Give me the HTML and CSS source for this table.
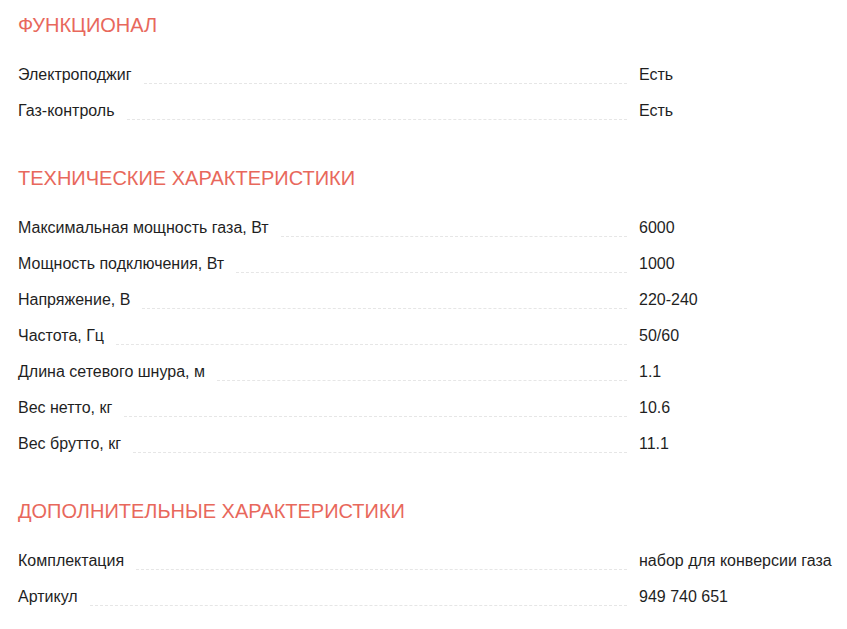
FILE: index.html
```html
<!DOCTYPE html>
<html lang="ru">
<head>
<meta charset="utf-8">
<link rel="stylesheet" href="styles.css">
</head>
<body>
<div class="specs">
  <section class="group">
    <h2 class="group-title">ФУНКЦИОНАЛ</h2>
    <div class="row"><span class="label">Электроподжиг</span><span class="dots"></span><span class="value">Есть</span></div>
    <div class="row"><span class="label">Газ-контроль</span><span class="dots"></span><span class="value">Есть</span></div>
  </section>
  <section class="group">
    <h2 class="group-title">ТЕХНИЧЕСКИЕ ХАРАКТЕРИСТИКИ</h2>
    <div class="row"><span class="label">Максимальная мощность газа, Вт</span><span class="dots"></span><span class="value">6000</span></div>
    <div class="row"><span class="label">Мощность подключения, Вт</span><span class="dots"></span><span class="value">1000</span></div>
    <div class="row"><span class="label">Напряжение, В</span><span class="dots"></span><span class="value">220-240</span></div>
    <div class="row"><span class="label">Частота, Гц</span><span class="dots"></span><span class="value">50/60</span></div>
    <div class="row"><span class="label">Длина сетевого шнура, м</span><span class="dots"></span><span class="value">1.1</span></div>
    <div class="row"><span class="label">Вес нетто, кг</span><span class="dots"></span><span class="value">10.6</span></div>
    <div class="row"><span class="label">Вес брутто, кг</span><span class="dots"></span><span class="value">11.1</span></div>
  </section>
  <section class="group">
    <h2 class="group-title">ДОПОЛНИТЕЛЬНЫЕ ХАРАКТЕРИСТИКИ</h2>
    <div class="row"><span class="label">Комплектация</span><span class="dots"></span><span class="value">набор для конверсии газа</span></div>
    <div class="row"><span class="label">Артикул</span><span class="dots"></span><span class="value">949 740 651</span></div>
  </section>
</div>
</body>
</html>
```

FILE: styles.css
```css
html, body {
  margin: 0;
  padding: 0;
  background: #fff;
}
body {
  font-family: "Liberation Sans", Arial, sans-serif;
  color: #1f1f1f;
}
.specs {
  padding: 12px 0 0 18px;
  width: 815px;
  display: flex;
  flex-direction: column;
  gap: 36px;
}
.group-title {
  margin: 0 0 19px 0;
  font-size: 20px;
  line-height: 26px;
  font-weight: normal;
  color: #e8685c;
}
.row {
  display: flex;
  align-items: flex-end;
  height: 36px;
  font-size: 16px;
  line-height: 36px;
}
.label {
  white-space: nowrap;
}
.dots {
  flex: 1;
  margin: 0 12px 9px 12px;
  border-bottom: 1px dashed #e6e6e6;
}
.value {
  width: 194px;
  white-space: nowrap;
}
```
